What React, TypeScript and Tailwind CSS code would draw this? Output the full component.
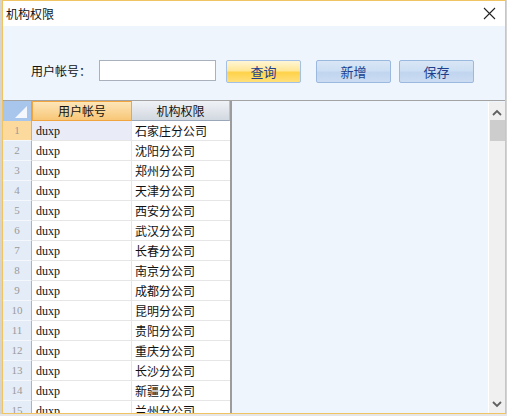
import React from "react";

const ROWS = [
  "石家庄分公司",
  "沈阳分公司",
  "郑州分公司",
  "天津分公司",
  "西安分公司",
  "武汉分公司",
  "长春分公司",
  "南京分公司",
  "成都分公司",
  "昆明分公司",
  "贵阳分公司",
  "重庆分公司",
  "长沙分公司",
  "新疆分公司",
  "兰州分公司",
];

const cjk = "font-['SimSun','Noto_Sans_CJK_SC',sans-serif]";
const serif = "font-['Liberation_Serif','Noto_Sans_CJK_SC',serif]";

function Button({ label, primary }: { label: string; primary?: boolean }) {
  return (
    <button
      className={
        "w-[75px] h-[23px] rounded-[2px] border text-[13px] leading-none text-[#1e3f8c] " +
        cjk +
        (primary
          ? " border-[#a4c0e4] bg-[linear-gradient(to_bottom,#fff6d6_0%,#ffe89a_45%,#ffd24a_55%,#ffe07a_100%)]"
          : " border-[#9bb8de] bg-[linear-gradient(to_bottom,#d9e6f6_0%,#cddff3_45%,#c1d5ef_55%,#cbdcf2_100%)]")
      }
    >
      {label}
    </button>
  );
}

export default function App() {
  return (
    <div className="w-[507px] h-[416px] bg-[#d4d4d4] overflow-hidden flex flex-col">
      <div className="ml-[2px] w-[504px] h-[414px] border border-[#f0c463] bg-[#eef5fd] flex flex-col shrink-0">
        {/* title bar */}
        <div className="h-[25px] bg-white flex items-center justify-between pl-[3px] pr-[8px] shrink-0">
          <span className={"text-[12px] text-[#111] " + cjk}>机构权限</span>
          <svg width="13" height="13" viewBox="0 0 13 13" className="mr-[1px]">
            <path d="M1 1 L12 12 M12 1 L1 12" stroke="#222" strokeWidth="1.1" />
          </svg>
        </div>

        {/* toolbar */}
        <div className="h-[75px] border-b border-[#a3a3a3] flex items-start pt-[33px] pl-[28px] shrink-0">
          <span className={"w-[68px] h-[23px] flex items-center text-[12px] text-[#111] " + cjk}>用户帐号：</span>
          <input className="w-[117px] h-[21px] mt-[1px] bg-white border border-[#a9b2bc] outline-none" />
          <div className="ml-[10px]">
            <Button label="查询" primary />
          </div>
          <div className="ml-[15px]">
            <Button label="新增" />
          </div>
          <div className="ml-[8px]">
            <Button label="保存" />
          </div>
        </div>

        {/* grid area */}
        <div className="flex-1 flex overflow-hidden">
          <div className="w-[229px] border-r-2 border-[#9c9c9c] bg-white flex flex-col shrink-0">
            <div className="h-[20px] flex shrink-0">
              <div className="w-[29px] bg-[#a8c6ec] border-r border-[#8eb0d8] relative">
                <svg width="12" height="12" viewBox="0 0 12 12" className="absolute right-[4px] bottom-[3px]">
                  <path d="M12 0 L12 12 L0 12 Z" fill="#f4f8fd" />
                </svg>
              </div>
              <div
                className={
                  "w-[100px] border border-[#f2a43e] bg-[linear-gradient(to_bottom,#fde6b8,#f8c778)] flex items-center justify-center text-[12px] text-[#111] " +
                  cjk
                }
              >
                用户帐号
              </div>
              <div
                className={
                  "flex-1 border-b border-[#9aa7b8] border-r border-r-[#b8c2ce] bg-[linear-gradient(to_bottom,#f0f2f6,#d2d8e0)] flex items-center justify-center text-[12px] text-[#111] " +
                  cjk
                }
              >
                机构权限
              </div>
            </div>
            {ROWS.map((org, i) => (
              <div key={i} className="h-[20px] flex shrink-0">
                <div
                  className={
                    "w-[29px] border-r border-[#9cb6d4] border-b border-b-[#f4f7fb] flex items-center justify-center text-[11px] text-[#9a9a9a] " +
                    serif +
                    (i === 0 ? " bg-[#fcd99d]" : " bg-[#e4ecf7]")
                  }
                >
                  {i + 1}
                </div>
                <div
                  className={
                    "w-[100px] border-r border-b border-[#e6e6e6] flex items-center pl-[4px] text-[12px] text-[#111] " +
                    serif +
                    (i === 0 ? " bg-[#e9ecf6]" : " bg-white")
                  }
                >
                  duxp
                </div>
                <div className={"flex-1 border-b border-[#e6e6e6] flex items-center pl-[3px] text-[12px] text-[#111] " + cjk}>
                  {org}
                </div>
              </div>
            ))}
          </div>
          <div className="flex-1" />
          <div className="w-[17px] mt-[1px] border-l border-white bg-[#f0f0f0] flex flex-col items-center shrink-0">
            <svg width="10" height="7" viewBox="0 0 10 7" className="mt-[7px]">
              <path d="M1 6 L5 2 L9 6" stroke="#606060" strokeWidth="1.8" fill="none" />
            </svg>
            <div className="w-[15px] h-[21px] mt-[4px] bg-[#cdcdcd]" />
            <div className="flex-1" />
            <svg width="10" height="7" viewBox="0 0 10 7" className="mb-[5px]">
              <path d="M1 1 L5 5 L9 1" stroke="#606060" strokeWidth="1.8" fill="none" />
            </svg>
          </div>
        </div>
      </div>
      {/* underlying window peeking out */}
      <div className="flex-1 bg-[#e6e6e6]" />
    </div>
  );
}
